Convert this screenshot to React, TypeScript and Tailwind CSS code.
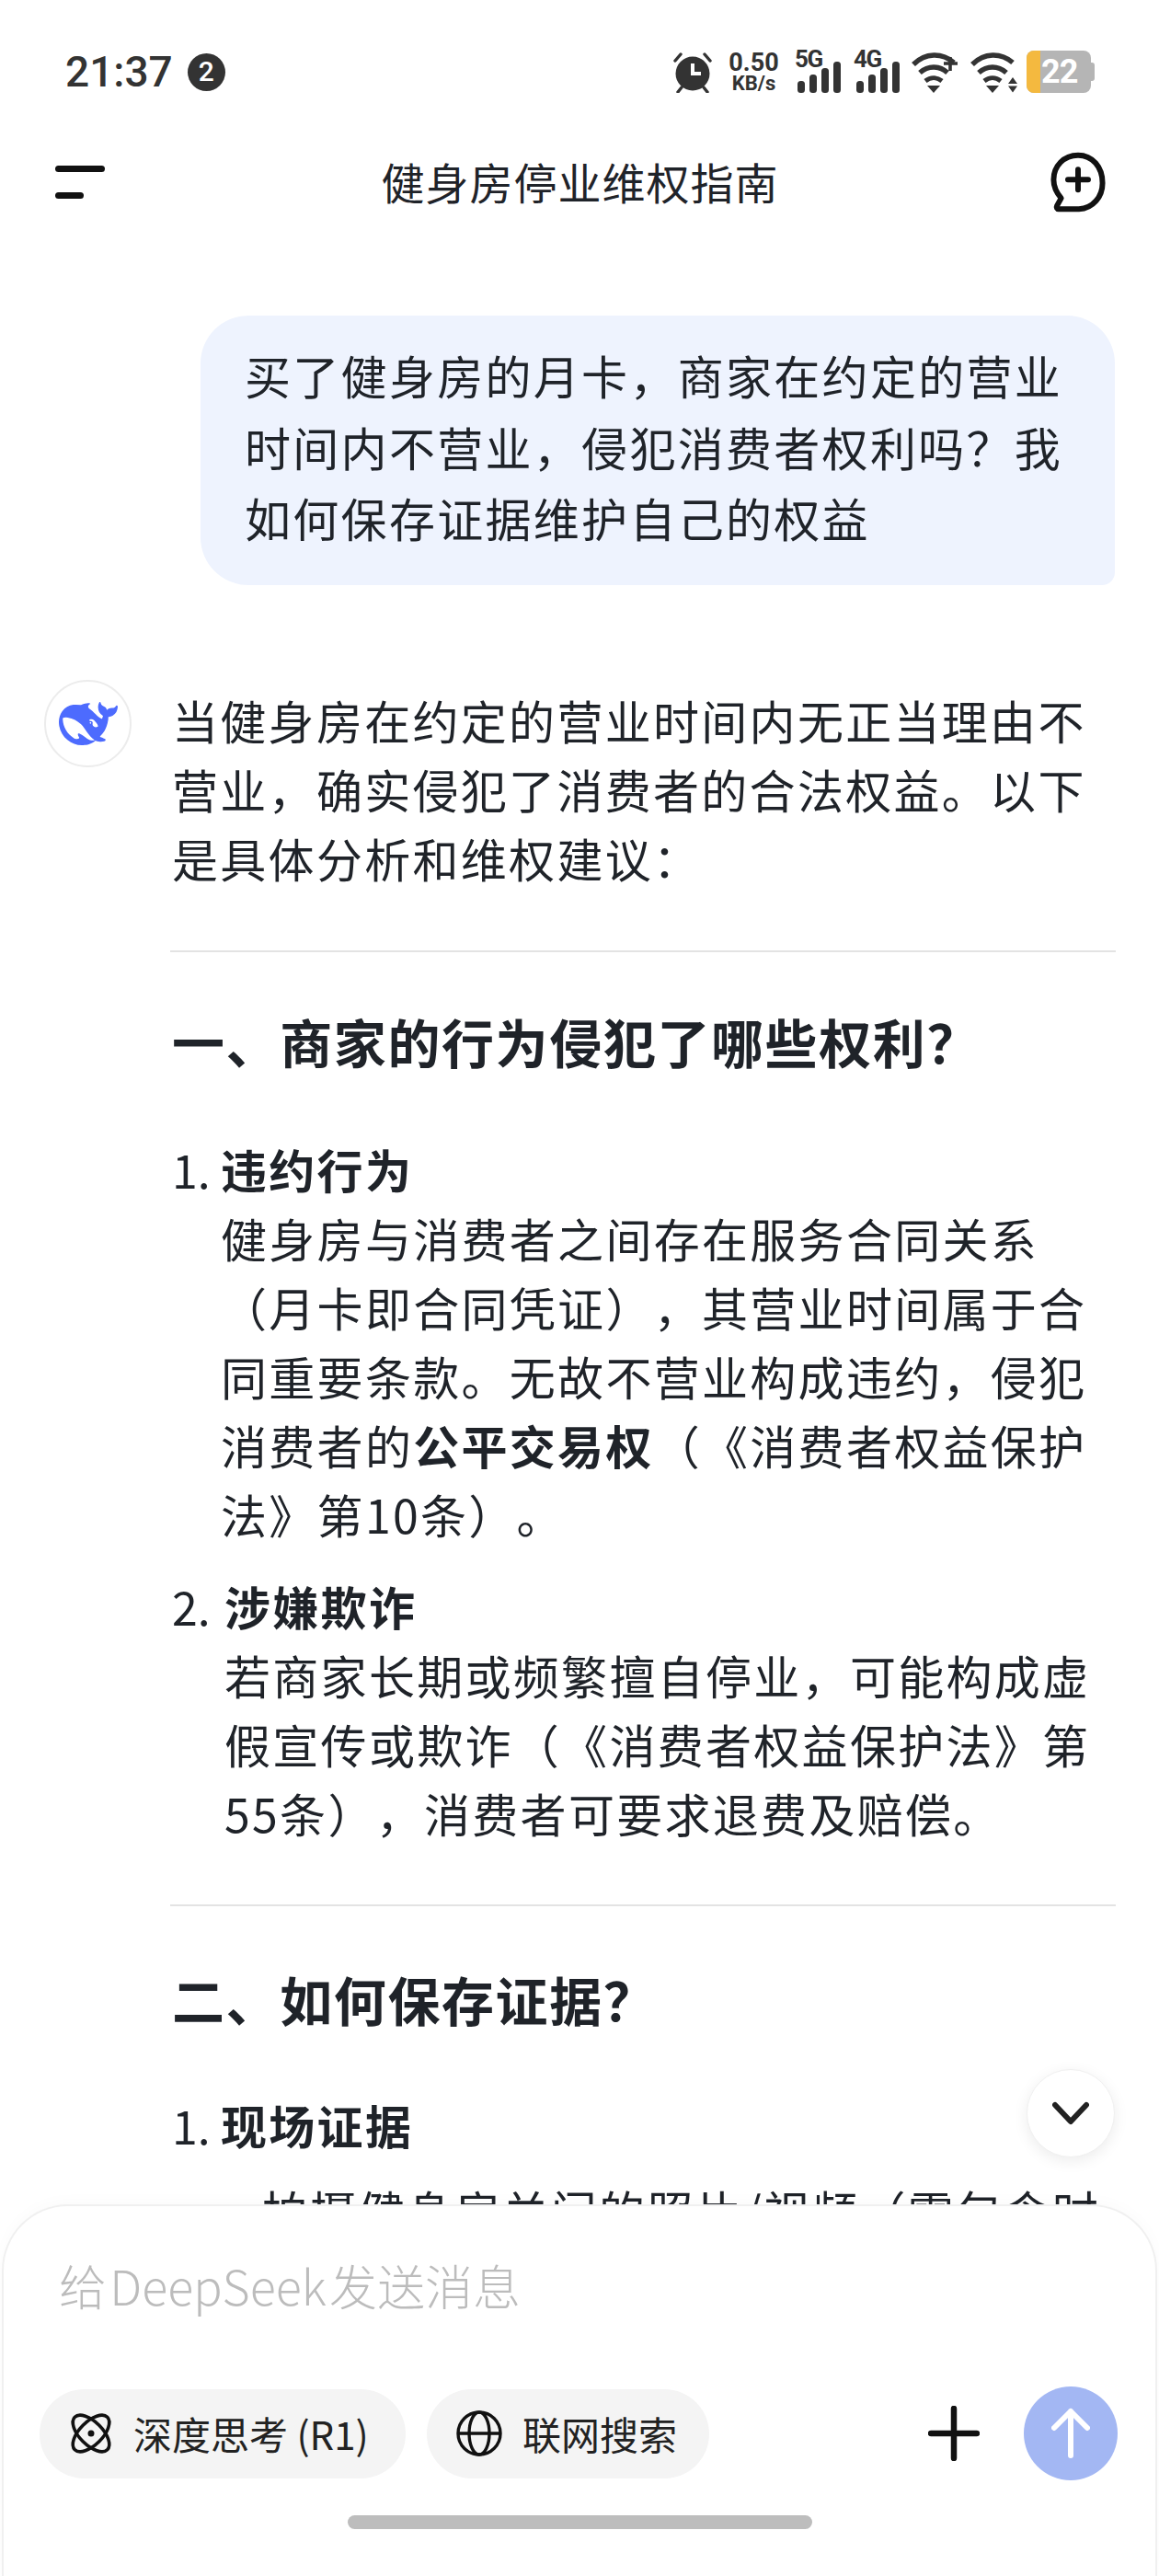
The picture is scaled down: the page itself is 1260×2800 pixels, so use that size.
import React from 'react';

const FONT = "font-['Noto_Sans_CJK_SC','Noto_Sans',sans-serif]";

function Alarm() {
  return (
    <svg width="44" height="46" viewBox="0 0 44 46" fill="none">
      <circle cx="22" cy="25" r="18.5" fill="#333" />
      <path d="M10 40l-4 5M34 40l4 5M3 11l6-7M41 11l-6-7" stroke="#333" strokeWidth="3.4" strokeLinecap="round" />
      <path d="M22 14v11h9" stroke="#fff" strokeWidth="4" />
    </svg>
  );
}

function Signal({ label }: { label: string }) {
  return (
    <div className="relative w-[50px] h-[46px]">
      <span className="absolute left-0 top-[-5px] text-[26px] leading-[28px] font-bold text-[#333] tracking-[-1.5px] font-['Roboto',sans-serif]">{label}</span>
      <svg className="absolute left-0 top-0" width="50" height="46" viewBox="0 0 50 46" fill="#333">
        <rect x="3" y="33" width="8" height="13" rx="3.5" />
        <rect x="16" y="26" width="8" height="20" rx="3.5" />
        <rect x="29" y="19" width="8" height="27" rx="3.5" />
        <rect x="42" y="12" width="8" height="34" rx="3.5" />
      </svg>
    </div>
  );
}

function Wifi({ extra }: { extra: 'plus' | 'arrows' }) {
  return (
    <svg width="52" height="46" viewBox="0 0 52 46" fill="none">
      <path d="M2 15C15 2 33 2 46 13" stroke="#333" strokeWidth="5.5" />
      <path d="M9 24c9-8 21-8 30 0" stroke="#333" strokeWidth="5.5" />
      <path d="M15 33c5.500-4.500 12.500-4.500 18 0" stroke="#333" strokeWidth="5" />
      <path d="M17 38h14l-7 8z" fill="#333" />
      {extra === 'plus' ? (
        <path d="M42 7v15M35 14h15" stroke="#333" strokeWidth="3.6" />
      ) : (
        <path d="M41 36l5-7 5 7zM41 38.500h10l-5 7z" fill="#333" />
      )}
    </svg>
  );
}

function Battery() {
  return (
    <div className="flex items-center">
      <div className="relative w-[70px] h-[46px] rounded-[8px] bg-[#b5b5b5] overflow-hidden flex items-center">
        <div className="w-[15px] h-full bg-[#f4b93f] shrink-0" />
        <span className="ml-[1px] text-[36px] leading-none font-bold text-white font-['Roboto',sans-serif] tracking-[-1px]">22</span>
      </div>
      <div className="w-[4px] h-[20px] rounded-r-[3px] bg-[#b5b5b5]" />
    </div>
  );
}

function StatusBar() {
  return (
    <div className="h-[140px] pt-[55px] pl-[71px] pr-[70px] flex items-start justify-between">
      <div className="flex items-center h-[46px] text-[#333]">
        <span className="text-[46px] leading-none font-medium font-['Roboto',sans-serif]">21:37</span>
        <span className="ml-[16px] w-[41px] h-[41px] rounded-full bg-[#333] text-white text-[30px] leading-none font-medium flex items-center justify-center font-['Roboto',sans-serif]">2</span>
      </div>
      <div className="flex items-center h-[46px]">
        <Alarm />
        <div className="ml-[17px] w-[55px] flex flex-col items-center text-[#333] font-bold font-['Roboto',sans-serif]">
          <span className="text-[27px] leading-[26px]">0.50</span>
          <span className="text-[22px] leading-[20px]">KB/s</span>
        </div>
        <div className="ml-[17px]"><Signal label="5G" /></div>
        <div className="ml-[14px]"><Signal label="4G" /></div>
        <div className="ml-[13px]"><Wifi extra="plus" /></div>
        <div className="ml-[12px]"><Wifi extra="arrows" /></div>
        <div className="ml-[9px]"><Battery /></div>
      </div>
    </div>
  );
}

function Header() {
  return (
    <div className="h-[116px] pl-[60px] pr-[56px] flex items-center justify-between">
      <div className="flex flex-col gap-[22px] w-[54px]">
        <div className="w-[54px] h-[7px] rounded-full bg-[#111]" />
        <div className="w-[31px] h-[7px] rounded-full bg-[#111]" />
      </div>
      <h1 className="ml-[7px] -mt-[3px] text-[47px] leading-none text-[#1f2329] tracking-[1px]">健身房停业维权指南</h1>
      <svg width="64" height="66" viewBox="0 0 66 72" fill="none">
        <path d="M33 4C16 4 4 17 4 33c0 9 3 15 9 22l-5 9c-1 2 0 4 2 4h24c17-1 28-15 28-31C62 18 50 4 33 4z" stroke="#111" strokeWidth="6.5" strokeLinejoin="round" />
        <path d="M33 21v24M21 33h24" stroke="#111" strokeWidth="6.500" strokeLinecap="round" />
      </svg>
    </div>
  );
}

function Logo() {
  return (
    <svg width="64" height="64" viewBox="0 0 24 24" fill="#4d6bfe" fillRule="evenodd">
      <path d="M23.748 4.482c-.254-.124-.364.113-.512.234-.051.039-.094.09-.137.136-.372.397-.806.657-1.373.626-.829-.046-1.537.214-2.163.848-.133-.782-.575-1.248-1.247-1.548-.352-.156-.708-.311-.955-.65-.172-.241-.219-.51-.305-.774-.055-.16-.11-.323-.293-.35-.2-.031-.278.136-.356.276-.313.572-.434 1.202-.422 1.84.027 1.436.633 2.58 1.838 3.393.137.093.172.187.129.323-.082.28-.18.552-.266.833-.055.179-.137.217-.329.14a5.526 5.526 0 01-1.736-1.18c-.857-.828-1.631-1.742-2.597-2.458a11.365 11.365 0 00-.689-.471c-.985-.957.13-1.743.388-1.836.27-.098.093-.432-.779-.428-.872.004-1.67.295-2.687.684a3.055 3.055 0 01-.465.137 9.597 9.597 0 00-2.883-.102c-1.885.21-3.39 1.102-4.497 2.623C.082 8.606-.231 10.684.152 12.85c.403 2.284 1.569 4.175 3.36 5.653 1.858 1.533 3.997 2.284 6.438 2.14 1.482-.085 3.133-.284 4.994-1.86.47.234.962.327 1.78.397.63.059 1.236-.03 1.705-.128.735-.156.684-.837.419-.961-2.155-1.004-1.682-.595-2.113-.926 1.096-1.296 2.746-2.642 3.392-7.003.05-.347.007-.565 0-.845-.004-.17.035-.237.23-.256a4.173 4.173 0 001.545-.475c1.396-.763 1.96-2.015 2.093-3.517.02-.23-.004-.467-.247-.588zM11.581 18c-2.089-1.642-3.102-2.183-3.52-2.16-.392.024-.321.471-.235.763.09.288.207.486.371.739.114.167.192.416-.113.603-.673.416-1.842-.14-1.897-.167-1.361-.802-2.5-1.86-3.301-3.307-.774-1.393-1.224-2.887-1.298-4.482-.02-.386.093-.522.477-.592a4.696 4.696 0 011.529-.039c2.132.312 3.946 1.265 5.468 2.774.868.86 1.525 1.887 2.202 2.891.72 1.066 1.494 2.082 2.48 2.914.348.292.625.514.891.677-.802.09-2.14.11-3.054-.614zm1-6.44a.306.306 0 01.415-.287.302.302 0 01.2.288.306.306 0 01-.31.307.303.303 0 01-.304-.308zm3.11 1.596c-.2.081-.399.151-.59.16a1.245 1.245 0 01-.798-.254c-.274-.23-.47-.358-.552-.758a1.73 1.73 0 01.016-.588c.07-.327-.008-.537-.239-.727-.187-.156-.426-.199-.688-.199a.559.559 0 01-.254-.078c-.11-.054-.2-.19-.114-.358.028-.054.16-.186.192-.21.356-.202.767-.136 1.146.016.352.144.618.408 1.001.782.391.451.462.576.685.914.176.265.336.537.445.848.067.195-.019.354-.25.452z" />
    </svg>
  );
}

function Composer() {
  return (
    <div className="absolute left-[2px] right-[2px] top-[2396px] bottom-0 bg-white rounded-t-[72px] border-t-2 border-x-2 border-[#f0f0f0] pt-[54px] shadow-[0_-4px_16px_rgba(0,0,0,0.02)]">
      <div className="pl-[60px] text-[52px] leading-[64px] text-[#bcbcbc] font-light">给&#8202;DeepSeek&#8202;发送消息</div>
      <div className="mt-[78px] pl-[39px] pr-[41px] flex items-center">
        <div className="h-[97px] w-[398px] pl-[32px] rounded-full bg-[#f4f4f4] flex items-center">
          <svg width="48" height="48" viewBox="0 0 48 48" fill="none" stroke="#111" strokeWidth="3.6">
            <ellipse cx="24" cy="24" rx="25" ry="12.500" transform="rotate(45 24 24)" />
            <ellipse cx="24" cy="24" rx="25" ry="12.500" transform="rotate(-45 24 24)" />
            <circle cx="24" cy="24" r="3.500" fill="#111" stroke="none" />
          </svg>
          <span className="ml-[22px] text-[42px] leading-none text-[#222]">深度思考 (R1)</span>
        </div>
        <div className="ml-[23px] h-[97px] w-[307px] pl-[32px] rounded-full bg-[#f4f4f4] flex items-center">
          <svg width="50" height="50" viewBox="0 0 50 50" fill="none" stroke="#111" strokeWidth="3.4">
            <circle cx="25" cy="25" r="23" />
            <ellipse cx="25" cy="25" rx="11" ry="23" />
            <path d="M2 25h46" />
          </svg>
          <span className="ml-[22px] text-[42px] leading-none text-[#222]">联网搜索</span>
        </div>
        <svg className="ml-auto" width="56" height="60" viewBox="0 0 56 60" fill="none" stroke="#111" strokeWidth="6.5" strokeLinecap="round">
          <path d="M28 3v54M3 30h50" />
        </svg>
        <div className="ml-[48px] w-[102px] h-[102px] rounded-full bg-[#a3b7f3] flex items-center justify-center">
          <svg width="42" height="56" viewBox="0 0 42 56" fill="none" stroke="#fff" strokeWidth="6" strokeLinecap="round" strokeLinejoin="round">
            <path d="M21 52V4M3 22L21 4l18 18" />
          </svg>
        </div>
      </div>
      <div className="mt-[38px] mx-auto w-[505px] h-[15px] rounded-full bg-[#bdbdbd]" />
    </div>
  );
}

export default function App() {
  return (
    <div className={`relative h-[2800px] w-[1260px] overflow-hidden bg-white text-[#1f2329] [text-spacing-trim:space-all] ${FONT}`}>
      <StatusBar />
      <Header />

      <div className="mt-[87px] ml-[218px] w-[994px] h-[293px] bg-[#eef3fe] rounded-[52px] rounded-br-[14px] pl-[48px] pr-[30px] pt-[26px] text-[50px] leading-[77.5px] tracking-[2.3px]">
        买了健身房的月卡，商家在约定的营业时间内不营业，侵犯消费者权利吗？我如何保存证据维护自己的权益
      </div>

      <div className="mt-[103px] pl-[48px] flex items-start">
        <div className="w-[95px] h-[95px] shrink-0 rounded-full border-2 border-[#ececec] flex items-center justify-center">
          <Logo />
        </div>
        <div className="ml-[44px] w-[1030px]">
          <p className="pt-[6px] text-[50px] leading-[75px] tracking-[2.3px]">
            当健身房在约定的营业时间内无正当理由不营业，确实侵犯了消费者的合法权益。以下是具体分析和维权建议：
          </p>
          <div className="mt-[63px] -ml-[2px] h-[2px] w-[1028px] bg-[#e3e3e3]" />
          <h2 className="mt-[58px] text-[57px] leading-[76px] font-bold tracking-[1.6px]">一、商家的行为侵犯了哪些权利？</h2>

          <div className="mt-[64px] flex text-[50px] leading-[75px] tracking-[2.3px]">
            <span className="w-[53px] shrink-0 tracking-normal">1.</span>
            <div className="w-[950px]">
              <strong className="font-bold">违约行为</strong>
              <p>健身房与消费者之间存在服务合同关系（月卡即合同凭证），其营业时间属于合同重要条款。无故不营业构成违约，侵犯消费者的<strong className="font-bold">公平交易权</strong>（《消费者权益保护法》第10条）。</p>
            </div>
          </div>
          <div className="mt-[25px] flex text-[50px] leading-[75px] tracking-[2.3px]">
            <span className="w-[57px] shrink-0 tracking-normal">2.</span>
            <div className="w-[950px]">
              <strong className="font-bold">涉嫌欺诈</strong>
              <p>若商家长期或频繁擅自停业，可能构成虚假宣传或欺诈（《消费者权益保护法》第55条），消费者可要求退费及赔偿。</p>
            </div>
          </div>

          <div className="mt-[62px] -ml-[2px] h-[2px] w-[1028px] bg-[#e3e3e3]" />
          <h2 className="mt-[62px] text-[57px] leading-[76px] font-bold tracking-[1.6px]">二、如何保存证据？</h2>

          <div className="mt-[62px] flex text-[50px] leading-[75px] tracking-[2.3px]">
            <span className="w-[53px] shrink-0 tracking-normal">1.</span>
            <div className="w-[950px]">
              <strong className="font-bold">现场证据</strong>
              <p className="mt-[18px] pl-[45px] w-[980px]">拍摄健身房关门的照片/视频（需包含时间、地点）</p>
            </div>
          </div>
        </div>
      </div>

      <button className="absolute left-[1116px] top-[2249px] w-[96px] h-[96px] rounded-full bg-white border border-[#f0f0f0] shadow-[0_4px_16px_rgba(0,0,0,0.08)] flex items-center justify-center z-10">
        <svg width="40" height="26" viewBox="0 0 40 26" fill="none" stroke="#222" strokeWidth="6" strokeLinecap="round" strokeLinejoin="round">
          <path d="M3 4l17 18L37 4" />
        </svg>
      </button>

      <Composer />
    </div>
  );
}
